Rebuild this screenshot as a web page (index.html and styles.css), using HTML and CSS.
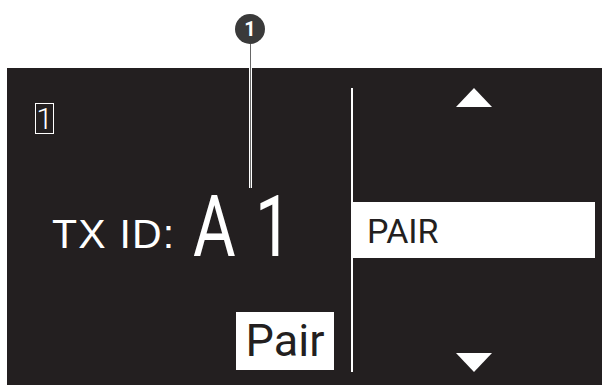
FILE: index.html
```html
<!DOCTYPE html>
<html>
<head>
<meta charset="utf-8">
<link rel="stylesheet" href="styles.css">
</head>
<body>
<div class="callout">
  <div class="callout-num">1</div>
  <div class="callout-line"></div>
</div>
<div class="panel">
  <div class="left">
    <div class="chan">1</div>
    <div class="txrow">
      <span class="txlabel">TX ID:</span>
      <span class="txval">A 1</span>
    </div>
    <div class="pairbtn">Pair</div>
  </div>
  <div class="right">
    <svg class="tri" width="36" height="19" viewBox="0 0 36 19"><polygon points="18,0 36,19 0,19" fill="#fff"/></svg>
    <div class="menuitem">PAIR</div>
    <svg class="tri" width="36" height="19" viewBox="0 0 36 19"><polygon points="0,0 36,0 18,19" fill="#fff"/></svg>
  </div>
</div>
</body>
</html>
```
FILE: styles.css
```css
html, body {
  margin: 0;
  padding: 0;
  background: #fff;
  width: 602px;
  height: 385px;
  overflow: hidden;
  font-family: Roboto, "Liberation Sans", sans-serif;
}
.callout {
  position: absolute;
  left: 235px;
  top: 14px;
  width: 30px;
  display: flex;
  flex-direction: column;
  align-items: center;
  z-index: 2;
}
.callout-num {
  width: 30px;
  height: 30px;
  border-radius: 50%;
  background: #3a3a3a;
  color: #fff;
  font-weight: 700;
  font-size: 20px;
  line-height: 30px;
  text-align: center;
}
.callout-line {
  width: 1px;
  height: 144px;
  margin-top: 0;
  background: #666;
  border-left: 1px solid #fff;
  border-right: 1px solid #fff;
}
.panel {
  margin: 68px 0 0 7px;
  height: 317px;
  background: #231f20;
  display: flex;
}
.left {
  width: 344px;
  display: flex;
  flex-direction: column;
  color: #fff;
}
.chan {
  margin: 35px 0 0 28px;
  width: 17px;
  height: 29px;
  border: 1px solid #fff;
  font-size: 30px;
  line-height: 30px;
  text-align: center;
  font-weight: 300;
}
.txrow {
  margin: 53px 0 0 45px;
  display: flex;
  align-items: baseline;
}
.txlabel {
  font-family: "Liberation Sans", Arial, sans-serif;
  font-size: 41px;
  font-weight: 400;
  letter-spacing: 1.2px;
}
.txval {
  margin-left: 18px;
  font-size: 86px;
  line-height: 64px;
  font-weight: 400;
  position: relative;
  top: 8px;
  display: inline-block;
  transform: scaleX(0.76);
  transform-origin: left center;
  word-spacing: 4px;
}
.pairbtn {
  margin: auto 17px 15px auto;
  width: 98px;
  height: 58px;
  background: #fff;
  color: #231f20;
  font-size: 45px;
  line-height: 58px;
  text-align: center;
}
.right {
  margin: 20px 0 13px 0;
  width: 242px;
  border-left: 2px solid #fff;
  display: flex;
  flex-direction: column;
  justify-content: space-between;
  align-items: center;
}
.tri {
  display: block;
}
.menuitem {
  align-self: stretch;
  margin-left: -2px;
  height: 56px;
  background: #fff;
  color: #231f20;
  font-size: 34px;
  line-height: 58px;
  padding-left: 16px;
}
```
